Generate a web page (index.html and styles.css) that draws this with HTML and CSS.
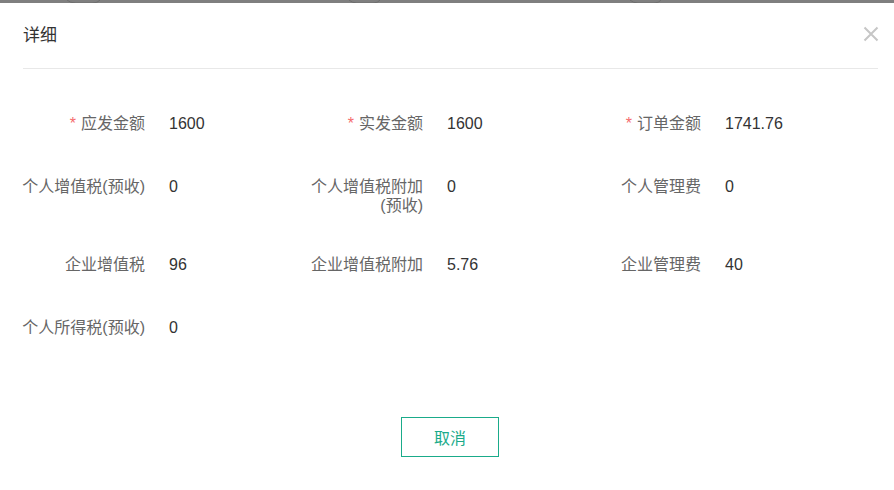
FILE: index.html
```html
<!DOCTYPE html>
<html lang="zh-CN">
<head>
<meta charset="utf-8">
<title>详细</title>
<link rel="stylesheet" href="styles.css">
</head>
<body>
<div class="backdrop">
  <svg class="backdrop-strip" width="894" height="3" viewBox="0 0 894 3">
    <rect width="894" height="3" fill="#7f7f7f"/>
    <path d="M67 0 Q70 3 76 3 L92 3 Q98 3 100 0" fill="none" stroke="#6e6e6e" stroke-width="1"/>
    <path d="M349 0 Q352 3 357 3 L373 3 Q378 3 380 0" fill="none" stroke="#6e6e6e" stroke-width="1"/>
    <path d="M630 0 Q633 3 638 3 L654 3 Q659 3 661 0" fill="none" stroke="#6e6e6e" stroke-width="1"/>
  </svg>
</div>
<div class="modal">
  <div class="modal-header">
    <span class="modal-title">详细</span>
    <span class="modal-close" aria-label="关闭">
      <svg width="16" height="16" viewBox="0 0 16 16">
        <path d="M1.5 1.5 L14.5 14.5 M14.5 1.5 L1.5 14.5" stroke="#c6c6c6" stroke-width="2" fill="none"/>
      </svg>
    </span>
  </div>
  <div class="modal-body">
    <div class="form-row">
      <div class="form-item"><div class="label"><span class="req">*</span>应发金额</div><div class="value">1600</div></div>
      <div class="form-item"><div class="label"><span class="req">*</span>实发金额</div><div class="value">1600</div></div>
      <div class="form-item"><div class="label"><span class="req">*</span>订单金额</div><div class="value">1741.76</div></div>
    </div>
    <div class="form-row">
      <div class="form-item"><div class="label">个人增值税(预收)</div><div class="value">0</div></div>
      <div class="form-item"><div class="label">个人增值税附加(预收)</div><div class="value">0</div></div>
      <div class="form-item"><div class="label">个人管理费</div><div class="value">0</div></div>
    </div>
    <div class="form-row">
      <div class="form-item"><div class="label">企业增值税</div><div class="value">96</div></div>
      <div class="form-item"><div class="label">企业增值税附加</div><div class="value">5.76</div></div>
      <div class="form-item"><div class="label">企业管理费</div><div class="value">40</div></div>
    </div>
    <div class="form-row">
      <div class="form-item"><div class="label">个人所得税(预收)</div><div class="value">0</div></div>
    </div>
  </div>
  <div class="modal-footer">
    <button class="btn-cancel" type="button">取消</button>
  </div>
</div>
</body>
</html>
```

FILE: styles.css
```css
html, body {
  margin: 0;
  padding: 0;
  background: #ffffff;
}

body {
  width: 894px;
  height: 490px;
  overflow: hidden;
  font-family: "Liberation Sans", "Noto Sans CJK SC", sans-serif;
  color: #333333;
}

.backdrop {
  height: 3px;
  background: #7f7f7f;
}

.backdrop-strip {
  display: block;
}

.modal {
  background: #ffffff;
  padding: 0 16px 0 23px;
}

.modal-header {
  display: flex;
  align-items: center;
  justify-content: space-between;
  height: 65px;
  border-bottom: 1px solid #e8e8e8;
}

.modal-title {
  font-size: 17px;
  line-height: 24px;
  color: #333333;
  margin-top: 1px;
}

.modal-close {
  display: flex;
  width: 16px;
  height: 16px;
  margin-right: -1px;
  margin-top: -4px;
}

.modal-body {
  padding-top: 35px;
  margin-left: -2px;
  display: flex;
  flex-direction: column;
  gap: 23px;
}

.form-row {
  display: grid;
  grid-template-columns: 278px 278px 278px;
  min-height: 40px;
}

.form-item {
  display: flex;
  align-items: flex-start;
}

.label {
  width: 124px;
  flex: none;
  padding: 10px 24px 7px 0;
  text-align: right;
  font-size: 16px;
  line-height: 19px;
  color: #666666;
}

.req {
  color: #f56c6c;
  margin-right: 5px;
}

.value {
  font-size: 16px;
  line-height: 40px;
  color: #333333;
}

.modal-footer {
  display: flex;
  justify-content: center;
  padding-top: 69px;
}

.btn-cancel {
  width: 98px;
  height: 40px;
  margin-left: -1px;
  background: #ffffff;
  border: 1px solid #1aab8a;
  border-radius: 0;
  color: #1aab8a;
  font-family: "Liberation Sans", "Noto Sans CJK SC", sans-serif;
  font-size: 16px;
  padding: 0;
  cursor: pointer;
}
```
